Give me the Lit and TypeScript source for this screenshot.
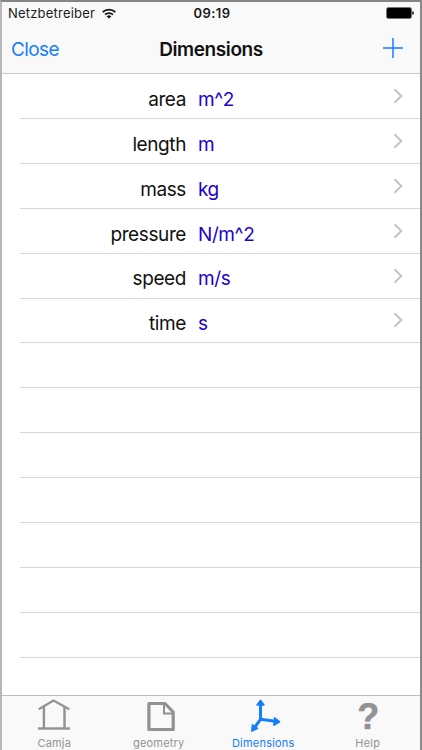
import { LitElement, html, css, svg } from 'lit';
import { customElement, property } from 'lit/decorators.js';

interface Dimension {
  name: string;
  unit: string;
}

const DIMENSIONS: Dimension[] = [
  { name: 'area', unit: 'm^2' },
  { name: 'length', unit: 'm' },
  { name: 'mass', unit: 'kg' },
  { name: 'pressure', unit: 'N/m^2' },
  { name: 'speed', unit: 'm/s' },
  { name: 'time', unit: 's' },
];

const EMPTY_ROWS = 7;

const TAB_ICONS = {
  house: svg`
    <path d="M2.7 13.2 L17.5 4.5 L33.3 13.2" stroke-width="2.2" />
    <path d="M7.9 11 V32 M28.5 11 V32" stroke-width="2.4" />
    <path d="M2 32.5 H34" stroke-width="2.4" />
  `,
  page: svg`
    <path d="M7.9 7.5 H24 L32.2 16 V33.5 H7.9 Z" stroke-width="3.2" stroke-linejoin="round" />
    <path d="M23 8 V17.5 H32" stroke-width="2" />
  `,
  axes: svg`
    <path d="M15.5 23.3 V6 M15.5 23.3 L32 25.4 M15.5 23.3 L8.6 33" stroke-width="3" />
    <path d="M15.5 4.2 L19 9 H12 Z M34.6 25.8 L28.8 29.3 L29.6 21.8 Z M6.7 35.2 L7.4 28.8 L12.6 32.4 Z"
      fill="currentColor" stroke-width="1.4" stroke-linejoin="round" />
  `,
};

@customElement('status-bar')
export class StatusBar extends LitElement {
  static styles = css`
    :host {
      display: grid;
      grid-template-columns: 1fr auto 1fr;
      align-items: center;
      height: 22px;
      padding: 0 6px;
      font-size: 13px;
      color: #1b1b1b;
    }
    .carrier {
      display: flex;
      align-items: center;
      gap: 7px;
      letter-spacing: 0.2px;
    }
    .time {
      font-weight: 600;
      letter-spacing: 0.4px;
      margin-left: 2px;
    }
    .battery {
      justify-self: end;
    }
    svg {
      display: block;
    }
  `;

  render() {
    return html`
      <div class="carrier">
        <span>Netzbetreiber</span>
        <svg width="14" height="11" viewBox="0 0 14 11" fill="none" stroke="#111" stroke-width="1.8">
          <path d="M0.7 4.2 A9 9 0 0 1 13.3 4.2" />
          <path d="M3 6.7 A5.8 5.8 0 0 1 11 6.7" />
          <path d="M7 10.6 L4.7 8.4 A3.4 3.4 0 0 1 9.3 8.4 Z" fill="#111" stroke="none" />
        </svg>
      </div>
      <span class="time">09:19</span>
      <svg class="battery" width="28" height="12" viewBox="0 0 28 12">
        <rect x="0.5" y="0.5" width="25" height="11" rx="2" fill="#000" stroke="#777" />
        <path d="M26.2 4 Q28 4.4 28 6 Q28 7.6 26.2 8 Z" fill="#222" />
      </svg>
    `;
  }
}

@customElement('nav-header')
export class NavHeader extends LitElement {
  @property() heading = '';

  static styles = css`
    :host {
      display: grid;
      grid-template-columns: 1fr auto 1fr;
      align-items: center;
      height: 49px;
      padding: 0 9px;
      border-bottom: 1px solid #c8c8ca;
    }
    button {
      padding: 0;
      border: 0;
      background: none;
      font: inherit;
      color: #157efb;
    }
    .close {
      justify-self: start;
      padding-top: 2px;
      font-size: 19px;
      letter-spacing: -0.6px;
    }
    .title {
      padding-top: 2px;
      font-size: 19px;
      font-weight: 600;
      letter-spacing: -0.4px;
      color: #111;
    }
    .add {
      justify-self: end;
      margin: 0 8px 2px 0;
    }
    svg {
      display: block;
    }
  `;

  render() {
    return html`
      <button class="close">Close</button>
      <span class="title">${this.heading}</span>
      <button class="add" aria-label="Add">
        <svg width="20" height="20" viewBox="0 0 20 20" fill="none" stroke="currentColor" stroke-width="1.5">
          <path d="M10 0 V20 M0 10 H20" />
        </svg>
      </button>
    `;
  }
}

@customElement('dimension-row')
export class DimensionRow extends LitElement {
  @property({ attribute: false }) dimension?: Dimension;

  static styles = css`
    :host {
      display: block;
      box-sizing: border-box;
      height: 44.92px;
      margin-left: 18px;
      border-bottom: 1px solid #d6d6d8;
    }
    .content {
      display: grid;
      grid-template-columns: 166px 1fr auto;
      column-gap: 12px;
      align-items: center;
      height: 100%;
      padding-right: 17px;
      font-size: 19px;
      letter-spacing: -0.4px;
    }
    .name,
    .unit {
      padding-top: 6.8px;
    }
    .name {
      text-align: right;
      color: #111;
    }
    .unit {
      color: #2100d0;
    }
    svg {
      display: block;
    }
  `;

  render() {
    if (!this.dimension) return null;
    return html`
      <div class="content">
        <span class="name">${this.dimension.name}</span>
        <span class="unit">${this.dimension.unit}</span>
        <svg width="10" height="16" viewBox="0 0 10 16" fill="none" stroke="#c4c4c9" stroke-width="2">
          <path d="M1.5 1.2 L8.3 8 L1.5 14.8" />
        </svg>
      </div>
    `;
  }
}

@customElement('tab-item')
export class TabItem extends LitElement {
  @property() label = '';
  @property() icon: keyof typeof TAB_ICONS | 'help' = 'house';
  @property({ type: Boolean, reflect: true }) active = false;

  static styles = css`
    :host {
      display: flex;
      flex-direction: column;
      align-items: center;
      color: #929292;
      font-size: 11px;
      letter-spacing: 0.2px;
    }
    :host([active]) {
      color: #157efb;
    }
    svg {
      display: block;
    }
    .help {
      width: 38px;
      height: 39px;
      padding-left: 1px;
      font: bold 36px/42px 'Liberation Sans', sans-serif;
      text-align: center;
      -webkit-text-stroke: 0.5px currentColor;
    }
    .label {
      line-height: 16px;
    }
  `;

  render() {
    return html`
      ${this.icon === 'help'
        ? html`<span class="help" aria-hidden="true">?</span>`
        : html`
            <svg width="36" height="39" viewBox="0 0 36 39" fill="none" stroke="currentColor">
              ${TAB_ICONS[this.icon]}
            </svg>
          `}
      <span class="label">${this.label}</span>
    `;
  }
}

@customElement('app-root')
export class AppRoot extends LitElement {
  static styles = css`
    :host {
      display: flex;
      flex-direction: column;
      box-sizing: border-box;
      width: 422px;
      height: 750px;
      overflow: hidden;
      border: solid;
      border-width: 2px 2px 0 2px;
      border-color: #858585 #8a8a8a #858585 #b8b8b8;
      background: #fff;
      font-family: Inter, 'Liberation Sans', sans-serif;
    }
    .top {
      background: #f9f9f9;
    }
    .list {
      flex: 1;
      min-height: 0;
    }
    .tabs {
      display: grid;
      grid-template-columns: repeat(4, 1fr);
      height: 54px;
      border-top: 1px solid #bdbdbd;
      background: #f9f9f9;
    }
  `;

  render() {
    return html`
      <header class="top">
        <status-bar></status-bar>
        <nav-header heading="Dimensions"></nav-header>
      </header>
      <main class="list">
        ${DIMENSIONS.map((d) => html`<dimension-row .dimension=${d}></dimension-row>`)}
        ${Array.from({ length: EMPTY_ROWS }, () => html`<dimension-row></dimension-row>`)}
      </main>
      <nav class="tabs">
        <tab-item label="Camja" icon="house"></tab-item>
        <tab-item label="geometry" icon="page"></tab-item>
        <tab-item label="Dimensions" icon="axes" active></tab-item>
        <tab-item label="Help" icon="help"></tab-item>
      </nav>
    `;
  }
}

declare global {
  interface HTMLElementTagNameMap {
    'app-root': AppRoot;
    'status-bar': StatusBar;
    'nav-header': NavHeader;
    'dimension-row': DimensionRow;
    'tab-item': TabItem;
  }
}
